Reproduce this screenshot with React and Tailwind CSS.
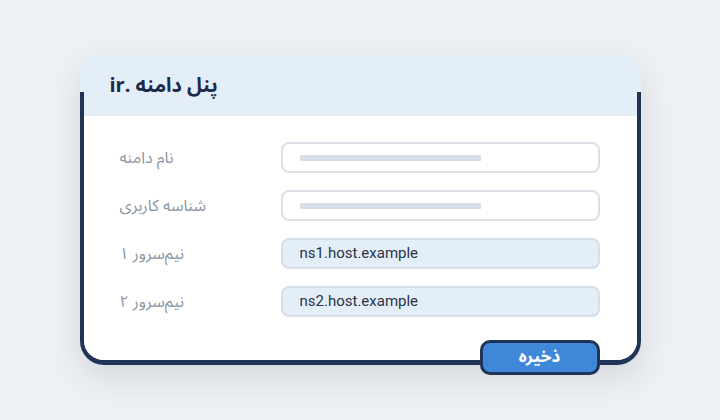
import React from "react";

const fa = { fontFamily: '"Noto Sans Arabic", "Vazirmatn", "DejaVu Sans", sans-serif' };

function Row({ label, value }) {
  return (
    <div className="grid grid-cols-[161px_1fr] items-center">
      <div className="text-[16px] text-[#8d95a3]" style={fa}>
        <span dir="rtl">{label}</span>
      </div>
      {value ? (
        <div className="h-[31px] rounded-[8px] border-2 border-[#d6dfe9] bg-[#e3eef9] flex items-center pl-[17px] text-[15px] text-[#2a3446] font-['Roboto',sans-serif]">
          {value}
        </div>
      ) : (
        <div className="h-[31px] rounded-[8px] border-2 border-[#dde1e7] bg-white flex items-center pl-[17px]">
          <div className="h-[6px] w-[181px] bg-[#d6dfe8]" />
        </div>
      )}
    </div>
  );
}

export default function App() {
  return (
    <div className="w-[720px] h-[420px] bg-[#eef1f3] flex items-center justify-center">
      <div className="w-[561px] flex flex-col rounded-[24px] shadow-[0_12px_32px_rgba(30,45,70,0.13)]">
        <div className="h-[61px] rounded-t-[22px] bg-[#e3eef9] flex items-center pl-[30px]">
          <span dir="rtl" className="text-[20px] font-bold text-[#1c2b48]" style={fa}>
            پنل دامنه .ir
          </span>
        </div>
        <div className="-mt-[24px] border-x-[4px] border-b-[5px] border-[#1f3456] rounded-b-[24px] flex flex-col">
          <div className="h-[24px]" />
          <div className="bg-white rounded-b-[20px] pt-[26px] pl-[36px] pr-[37px] flex flex-col">
            <div className="flex flex-col gap-[17px]">
              <Row label="نام دامنه" />
              <Row label="شناسه کاربری" />
              <Row label="نیم‌سرور ۱" value="ns1.host.example" />
              <Row label="نیم‌سرور ۲" value="ns2.host.example" />
            </div>
            <div className="flex justify-end mt-[23px] -mb-[15px]">
              <button
                className="w-[120px] h-[35px] rounded-[10px] border-[3px] border-[#1f3456] bg-[#3f87d9] text-white text-[17px] font-bold flex items-center justify-center"
                style={fa}
              >
                <span dir="rtl">ذخیره</span>
              </button>
            </div>
          </div>
        </div>
      </div>
    </div>
  );
}
